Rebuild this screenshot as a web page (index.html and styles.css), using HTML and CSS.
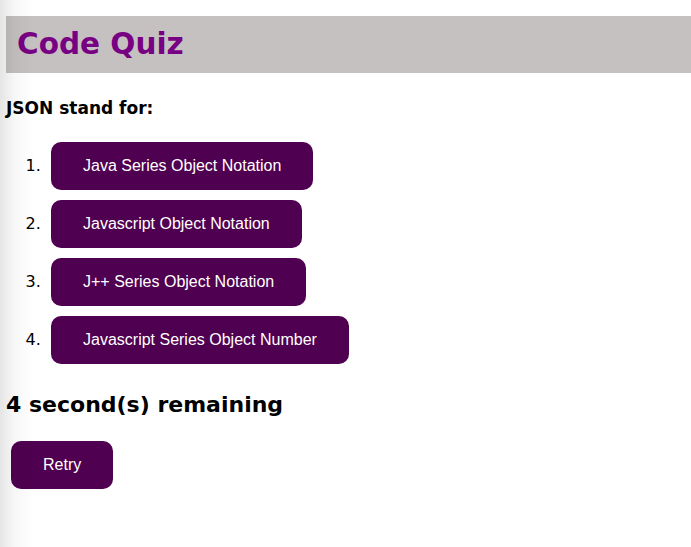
FILE: index.html
```html
<!DOCTYPE html>
<html>
<head>
<meta charset="utf-8">
<link rel="stylesheet" href="styles.css">
</head>
<body>
<div class="shade"></div>
<header class="header">
  <h1 class="title">Code Quiz</h1>
</header>
<main class="quiz">
  <p class="question">JSON stand for:</p>
  <ol class="answers">
    <li class="answer"><button class="btn">Java Series Object Notation</button></li>
    <li class="answer"><button class="btn">Javascript Object Notation</button></li>
    <li class="answer"><button class="btn">J++ Series Object Notation</button></li>
    <li class="answer"><button class="btn">Javascript Series Object Number</button></li>
  </ol>
  <h2 class="timer">4 second(s) remaining</h2>
  <button class="btn retry">Retry</button>
</main>
</body>
</html>
```
FILE: styles.css
```css
html, body {
  margin: 0;
  padding: 0;
  background: #ffffff;
}
body {
  padding: 16px 0 0 6px;
  font-family: "DejaVu Sans", Verdana, sans-serif;
  color: #000;
}
.shade {
  position: fixed;
  left: 0;
  top: 0;
  bottom: 0;
  width: 34px;
  background: linear-gradient(to right, rgba(0,0,0,0.1), rgba(0,0,0,0.03) 14px, rgba(0,0,0,0));
  pointer-events: none;
}
.header {
  background: #c5c1c0;
  height: 57px;
  display: flex;
  align-items: center;
  padding-left: 11px;
}
.title {
  margin: 0;
  font-size: 29.5px;
  font-weight: bold;
  color: #780083;
  line-height: 1;
}
.quiz {
  display: block;
}
.question {
  margin: 25px 0 0 0;
  font-size: 17px;
  font-weight: bold;
  line-height: 20px;
}
.answers {
  margin: 24px 0 0 0;
  padding-left: 45px;
  font-size: 16px;
}
.answer {
  margin-bottom: 10px;
}
.answer::marker {
  content: counter(list-item) ".\00a0\00a0";
}
.btn {
  background: #4f0050;
  color: #fff;
  border: none;
  border-radius: 10px;
  padding: 15px 32px;
  font-family: "Liberation Sans", Arial, sans-serif;
  font-size: 16px;
  line-height: 18px;
  cursor: pointer;
}
.timer {
  margin: 26px 0 0 0;
  font-size: 22px;
  font-weight: bold;
  line-height: 30px;
}
.retry {
  margin: 21px 0 0 5px;
}
```
